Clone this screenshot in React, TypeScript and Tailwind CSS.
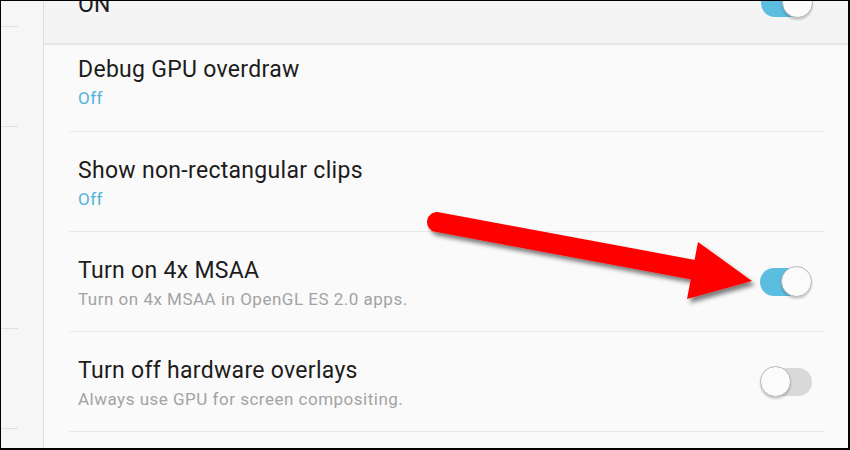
import React from 'react';

interface ToggleProps {
  on: boolean;
}

function Toggle({ on }: ToggleProps) {
  return (
    <div className="relative w-[52px] h-[31px] shrink-0">
      <div
        className={
          on
            ? 'absolute left-0 right-[2px] top-[1.5px] h-[28px] rounded-full bg-[#5bbde0]'
            : 'absolute left-[2px] right-0 top-[1.5px] h-[28px] rounded-full bg-[#d9d9d9]'
        }
      />
      <div
        className={
          on
            ? 'absolute right-0 top-0 w-[31px] h-[31px] rounded-full bg-[#fbfbfb] border-[1.5px] border-[#b8b8b8] shadow-[0_2px_2px_rgba(0,0,0,0.18)]'
            : 'absolute left-0 top-0 w-[31px] h-[31px] rounded-full bg-[#fbfbfb] border-[1.5px] border-[#b8b8b8] shadow-[0_2px_2px_rgba(0,0,0,0.18)]'
        }
      />
    </div>
  );
}

interface RowProps {
  title: string;
  sub: string;
  blue?: boolean;
  toggle?: 'on' | 'off';
  first?: boolean;
}

function Row({ title, sub, blue, toggle, first }: RowProps) {
  return (
    <div
      className={
        (first ? 'h-[87px] pt-[11px] ' : 'h-[100px] pt-[25px] ') +
        'ml-[25px] mr-[24px] pl-[9px] pr-[12px] border-b border-[#e8e8e8] flex items-start justify-between'
      }
    >
      <div className="flex flex-col">
        <div className="text-[23px] leading-[27px] tracking-[0.3px] text-[#1c1c1c]">{title}</div>
        <div
          className={
            'mt-[5px] text-[17px] leading-[20px] tracking-[0.5px] ' +
            (blue ? 'text-[#4fb4dc]' : 'text-[#a3a3a3]')
          }
        >
          {sub}
        </div>
      </div>
      {toggle && (
        <div className="self-center -mt-[25px]">
          <Toggle on={toggle === 'on'} />
        </div>
      )}
    </div>
  );
}

export default function App() {
  return (
    <div
      className="relative w-[850px] h-[450px] overflow-hidden bg-[#fafafa] border-black border-t border-l border-r-2 border-b-2 flex"
      style={{ fontFamily: 'Roboto, "Noto Sans", sans-serif' }}
    >
      {/* left pane edge */}
      <div className="w-[43px] shrink-0 bg-[#f6f6f6] border-r border-[#dcdcdc] flex flex-col">
        <div className="h-[25px]" />
        <div className="w-[17px] h-px bg-[#e0e0e0]" />
        <div className="h-[99px]" />
        <div className="w-[17px] h-px bg-[#e0e0e0]" />
        <div className="h-[201px]" />
        <div className="w-[17px] h-px bg-[#e0e0e0]" />
        <div className="h-[99px]" />
        <div className="w-[17px] h-px bg-[#e0e0e0]" />
      </div>

      {/* settings list */}
      <div className="flex-1 flex flex-col">
        <div className="h-[44px] shrink-0 bg-[#f4f4f4] border-b-2 border-[#e5e5e5] flex items-start justify-between pl-[34px] pr-[35px]">
          <div className="-mt-[10px] text-[23px] leading-[27px] tracking-[0.3px] text-[#1c1c1c]">ON</div>
          <div className="-mt-[14px]">
            <Toggle on />
          </div>
        </div>
        <Row first title="Debug GPU overdraw" sub="Off" blue />
        <Row title="Show non-rectangular clips" sub="Off" blue />
        <Row title="Turn on 4x MSAA" sub="Turn on 4x MSAA in OpenGL ES 2.0 apps." toggle="on" />
        <Row title="Turn off hardware overlays" sub="Always use GPU for screen compositing." toggle="off" />
      </div>

      {/* red callout arrow */}
      <svg
        className="absolute left-0 top-0 pointer-events-none"
        width="850"
        height="450"
        viewBox="1 1 850 450"
      >
        <defs>
          <filter id="arrowShadow" x="-10%" y="-30%" width="120%" height="160%">
            <feDropShadow dx="3" dy="4" stdDeviation="2" floodColor="#000" floodOpacity="0.5" />
          </filter>
        </defs>
        <g filter="url(#arrowShadow)" fill="#ff0000">
          <line x1="437" y1="222" x2="700" y2="271" stroke="#ff0000" strokeWidth="20" strokeLinecap="round" />
          <polygon points="698,242 752,281 687,299" />
        </g>
      </svg>
    </div>
  );
}
